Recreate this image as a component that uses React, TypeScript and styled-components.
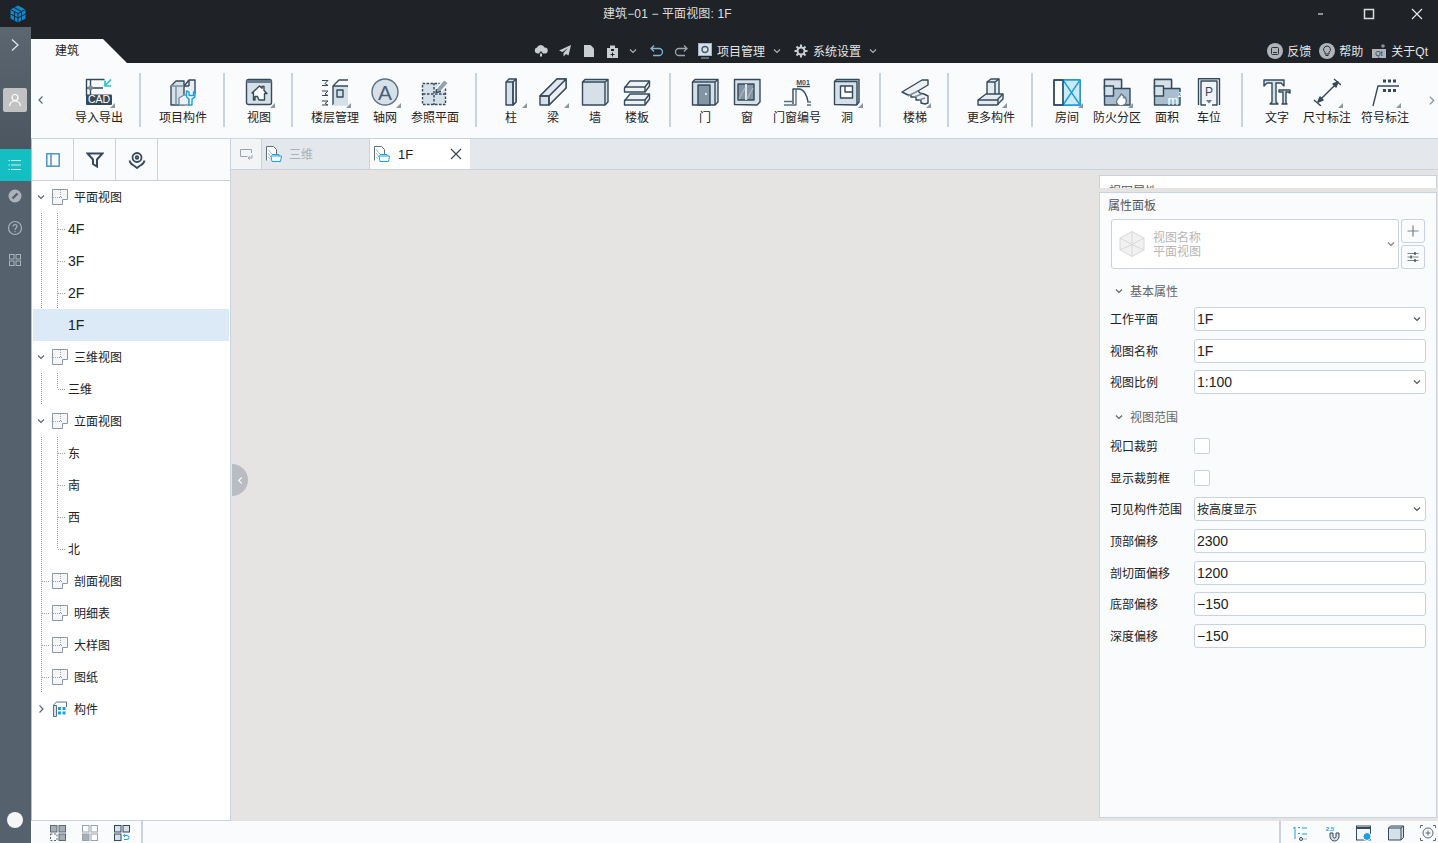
import React from 'react';
import styled, { createGlobalStyle } from 'styled-components';

const INK = '#34495c';
const FILL = '#d5e0e8';
const BLUE = '#1c9fe0';
const LINE = '#c8d2e0';

const GlobalStyle = createGlobalStyle`
  html, body { margin: 0; padding: 0; width: 1438px; height: 843px; overflow: hidden; }
  body { font-family: "Liberation Sans", "Noto Sans CJK SC", sans-serif; font-size: 12px; color: #222; }
  * { box-sizing: border-box; }
  svg { display: block; flex: none; }
`;

const Page = styled.div`
  width: 1438px;
  height: 843px;
  display: flex;
  flex-direction: column;
  background: #1f2327;
`;
const TitleBar = styled.div`
  height: 27px;
  display: flex;
  align-items: center;
  color: #dedede;
`;
const LogoCell = styled.div`
  width: 36px;
  padding-left: 10px;
`;
const TitleText = styled.div`
  margin-left: 567px;
  white-space: pre;
  line-height: 26px;
  letter-spacing: 0.12px;
`;
const WinControls = styled.div`
  margin-left: auto;
  display: flex;
  gap: 6px;
`;
const WinButton = styled.div`
  width: 42px;
  height: 24px;
  display: flex;
  align-items: center;
  justify-content: center;
`;
const Body = styled.div`
  flex: 1;
  display: flex;
  min-height: 0;
`;
const Rail = styled.div`
  width: 31px;
  flex: none;
  padding-right: 1px;
  display: flex;
  flex-direction: column;
  align-items: stretch;
  background: linear-gradient(#5c6670 0, #4b5661 122px, #55626e 123px);
`;
const RailArrow = styled.div`
  height: 36px;
  display: flex;
  align-items: center;
  justify-content: center;
`;
const RailUser = styled.div`
  margin: 25px 3px 0;
  height: 24px;
  background: #c2c2c2;
  border-radius: 2px;
  display: flex;
  align-items: center;
  justify-content: center;
`;
const RailActive = styled.div`
  margin: 37px -1px 0 0;
  padding-right: 1px;
  height: 32px;
  background: #14bfc4;
  display: flex;
  align-items: center;
  justify-content: center;
`;
const RailItem = styled.div`
  height: 32px;
  padding-bottom: 2px;
  display: flex;
  align-items: center;
  justify-content: center;
`;
const RailDot = styled.div`
  margin: auto auto 15px;
  width: 16px;
  height: 16px;
  border-radius: 50%;
  background: #f6f6f6;
`;
const Main = styled.div`
  flex: 1;
  min-width: 0;
  display: flex;
  flex-direction: column;
`;
const TabRow = styled.div`
  height: 36px;
  display: flex;
  align-items: flex-end;
  color: #e4e4e4;
`;
const RibbonTab = styled.div`
  width: 96px;
  height: 24px;
  padding-left: 24px;
  line-height: 25px;
  color: #222;
  background: #fafbfc;
  clip-path: polygon(0 0, 72px 0, 96px 24px, 0 24px);
`;
const QuickTools = styled.div`
  margin-left: 402px;
  height: 24px;
  display: flex;
  align-items: center;
`;
const QuickIcon = styled.div<{ $w?: number; $ml?: number; $mr?: number }>`
  width: ${p => p.$w ?? 24}px;
  margin-left: ${p => p.$ml ?? 0}px;
  margin-right: ${p => p.$mr ?? 0}px;
  height: 24px;
  display: flex;
  align-items: center;
  justify-content: center;
`;
const QuickLabel = styled.span`
  white-space: nowrap;
  margin: 0 4px 2px 4px;
`;
const HelpLinks = styled.div`
  margin-left: auto;
  height: 24px;
  padding-right: 10px;
  display: flex;
  align-items: center;
  gap: 8px;
`;
const HelpLink = styled.div`
  display: flex;
  align-items: center;
  gap: 4px;
  white-space: nowrap;
`;
const HelpText = styled.span`
  margin-bottom: 2px;
`;
const Ribbon = styled.div`
  height: 76px;
  flex: none;
  display: flex;
  background: #fafbfc;
  border-bottom: 1px solid ${LINE};
`;
const RibbonArrow = styled.div<{ $end?: boolean }>`
  width: ${p => (p.$end ? 24 : 39)}px;
  height: 74px;
  display: flex;
  align-items: center;
  justify-content: ${p => (p.$end ? 'flex-end' : 'flex-start')};
  padding: ${p => (p.$end ? '0 1px 0 0' : '0 0 0 5px')};
  flex: none;
`;
const RibbonGroup = styled.div`
  display: flex;
`;
const RibbonSep = styled.div`
  width: 2px;
  height: 54px;
  margin: 10px 13px 0 11px;
  background: ${LINE};
`;
const RibbonItem = styled.div<{ $w: number }>`
  width: ${p => p.$w}px;
  padding-top: 15px;
  display: flex;
  flex-direction: column;
  align-items: center;
`;
const RibbonIcon = styled.div<{ $menu?: boolean }>`
  position: relative;
  width: 28px;
  height: 28px;
  ${p => p.$menu && `
    &::after {
      content: '';
      position: absolute;
      right: -2px;
      bottom: -2px;
      border-style: solid;
      border-width: 0 0 5px 5px;
      border-color: transparent transparent #8a98a5 transparent;
    }
  `}
`;
const RibbonLabel = styled.div`
  margin-top: 4px;
  line-height: 16px;
  white-space: nowrap;
`;
const Content = styled.div`
  flex: 1;
  display: flex;
  min-height: 0;
`;
const TreePanel = styled.div`
  width: 200px;
  flex: none;
  display: flex;
  flex-direction: column;
  background: #fff;
  border-left: 1px solid #b4c0cc;
  border-right: 1px solid ${LINE};
  border-bottom: 1px solid ${LINE};
`;
const TreeTools = styled.div`
  height: 42px;
  flex: none;
  display: flex;
  background: #fafbfc;
  border-bottom: 1px solid ${LINE};
`;
const TreeTool = styled.div`
  width: 42px;
  display: flex;
  align-items: center;
  justify-content: center;
  border-right: 1px solid ${LINE};
`;
const TreeRows = styled.div`
  padding: 0 1px;
`;
const TreeRow = styled.div<{ $selected?: boolean }>`
  height: 32px;
  display: flex;
  align-items: center;
  background: ${p => (p.$selected ? '#dce9f6' : 'transparent')};
`;
const TreeCell = styled.div`
  width: 16px;
  height: 32px;
  flex: none;
  display: flex;
  align-items: center;
  justify-content: center;
`;
const TreeText = styled.span<{ $latin?: boolean; $leaf?: boolean }>`
  margin-left: ${p => (p.$leaf ? 3 : 0)}px;
  margin-bottom: ${p => (p.$latin ? 0 : 2)}px;
  font-size: ${p => (p.$latin ? 14 : 12)}px;
`;
const TreeNodeIcon = styled.span`
  margin: 0 6px 0 3px;
`;
const Workspace = styled.div`
  flex: 1;
  min-width: 0;
  position: relative;
  display: flex;
  flex-direction: column;
`;
const DocTabs = styled.div`
  height: 31px;
  flex: none;
  display: flex;
  background: #e4e8ec;
  border-bottom: 1px solid ${LINE};
`;
const DocPin = styled.div`
  width: 31px;
  display: flex;
  align-items: center;
  justify-content: center;
  background: #f3f4f6;
  border-right: 1px solid ${LINE};
`;
const DocTab = styled.div<{ $active?: boolean }>`
  display: flex;
  align-items: center;
  gap: ${p => (p.$active ? 8 : 7)}px;
  padding-left: 4px;
  width: ${p => (p.$active ? 100 : 108)}px;
  background: ${p => (p.$active ? '#fff' : 'transparent')};
  color: ${p => (p.$active ? '#222' : '#a8b1ba')};
  border-right: ${p => (p.$active ? 'none' : `1px solid ${LINE}`)};
  font-size: ${p => (p.$active ? 13 : 12)}px;
`;
const DocLabel = styled.span`
  margin-bottom: 2px;
`;
const DocClose = styled.span`
  margin-left: auto;
  margin-right: 8px;
`;
const Canvas = styled.div`
  flex: 1;
  min-height: 0;
  display: flex;
  justify-content: flex-end;
  padding: 5px 1px 3px 0;
  background: #e5e4e2;
`;
const Collapse = styled.div`
  position: absolute;
  left: 1px;
  top: 325px;
  width: 16px;
  height: 32px;
  border-radius: 0 16px 16px 0;
  background: #b9bcc0;
  display: flex;
  align-items: center;
  justify-content: center;
`;
const SideColumn = styled.div`
  width: 338px;
  display: flex;
  flex-direction: column;
  gap: 4px;
`;
const ClippedPanel = styled.div`
  height: 13px;
  flex: none;
  overflow: hidden;
  padding: 8px 0 0 9px;
  line-height: 16px;
  color: #555;
  background: #fff;
  border: 1px solid ${LINE};
  border-bottom: none;
`;
const PropsPanel = styled.div`
  flex: 1;
  padding: 5px 10px 0 8px;
  background: #fafbfc;
  border: 1px solid ${LINE};
`;
const PropsTitle = styled.div`
  line-height: 16px;
  color: #555;
`;
const ViewPicker = styled.div`
  display: flex;
  gap: 2px;
  margin: 5px 0 0 3px;
`;
const ViewBox = styled.div`
  width: 288px;
  height: 50px;
  display: flex;
  align-items: center;
  padding: 0 2px 0 6px;
  background: #fff;
  border: 1px solid ${LINE};
  border-radius: 3px;
`;
const ViewText = styled.div`
  margin: 2px 0 0 7px;
  line-height: 14px;
  color: #b6b6b6;
`;
const ViewChevron = styled.div`
  margin-left: auto;
`;
const ViewButtons = styled.div`
  display: flex;
  flex-direction: column;
  gap: 2px;
`;
const ViewButton = styled.div`
  width: 24px;
  height: 24px;
  display: flex;
  align-items: center;
  justify-content: center;
  border: 1px solid ${LINE};
  border-radius: 3px;
  background: #fafbfc;
`;
const SectionHead = styled.div<{ $first?: boolean }>`
  height: 16px;
  margin: ${p => (p.$first ? '14px 0 8px' : '15px 0 8.6px')};
  padding-left: 6px;
  display: flex;
  align-items: center;
  gap: 6px;
  color: #666;
`;
const SectionText = styled.span`
  margin-bottom: 1px;
`;
const PropList = styled.div`
  display: flex;
  flex-direction: column;
  gap: 7.67px;
`;
const PropRow = styled.div`
  height: 24px;
  display: flex;
  align-items: center;
  padding-left: 2px;
`;
const PropLabel = styled.div`
  width: 84px;
  flex: none;
  white-space: nowrap;
  padding-bottom: 1px;
`;
const Field = styled.div<{ $cjk?: boolean }>`
  width: 232px;
  height: 24px;
  display: flex;
  align-items: center;
  justify-content: space-between;
  padding: 0 3px 0 2px;
  background: #fff;
  border: 1px solid ${LINE};
  border-radius: 3px;
  font-size: ${p => (p.$cjk ? 12 : 14)}px;
`;
const FieldValue = styled.span<{ $cjk?: boolean }>`
  margin-bottom: ${p => (p.$cjk ? 2 : 0)}px;
`;
const Check = styled.div`
  width: 16px;
  height: 16px;
  background: #fff;
  border: 1px solid ${LINE};
  border-radius: 2px;
`;
const StatusBar = styled.div`
  height: 22px;
  flex: none;
  display: flex;
  align-items: center;
  background: #fafbfc;
`;
const StatusGroup = styled.div`
  height: 22px;
  display: flex;
  align-items: center;
  gap: 16px;
  padding: 2px 0 0 19px;
`;
const StatusSep = styled.div<{ $push?: boolean }>`
  width: 2px;
  height: 22px;
  background: ${LINE};
  margin-left: ${p => (p.$push ? 'auto' : '11px')};
`;
const StatusRight = styled.div`
  height: 22px;
  display: flex;
  align-items: center;
  gap: 16px;
  padding: 2px 2px 0 11px;
`;

type IconProps = { children: React.ReactNode };
const Svg = ({ children }: IconProps) => (
  <svg width={28} height={28} viewBox="0 0 28 28" fill="none" stroke={INK} strokeWidth={1.4} strokeLinejoin="round">
    {children}
  </svg>
);
const Chevron = ({ dir = 'down', color = '#5b6670', size = 10 }: { dir?: 'down' | 'left' | 'right'; color?: string; size?: number }) => {
  const d = dir === 'down' ? 'M2 3.5 5 6.5 8 3.5' : dir === 'left' ? 'M6.5 1.5 3 5l3.5 3.5' : 'M3.5 1.5 7 5 3.5 8.5';
  return (
    <svg width={size} height={size} viewBox="0 0 10 10" fill="none" stroke={color} strokeWidth={1.2}>
      <path d={d} />
    </svg>
  );
};

const ribbonIcons: Record<string, React.ReactNode> = {
  cad: (
    <Svg>
      <path d="M1.5 18V1.5h18M1.5 10H18M5.5 1.5V18" />
      <circle cx="5.5" cy="10" r="2.4" fill="#7d8b98" stroke="none" />
      <rect x="1" y="16.5" width="26" height="10.5" rx="1" fill={INK} stroke="none" />
      <text x="14" y="25.4" textAnchor="middle" fontSize="10.5" fill="#fff" stroke="none" fontFamily="Liberation Sans">CAD</text>
      <path d="M26 1.5 20 7.5M20 2.5v5.5h6" stroke="#1fc4c8" strokeWidth={1.6} />
    </Svg>
  ),
  part: (
    <Svg>
      <path d="M2 27V8l5-5h8v24z" fill={FILL} />
      <path d="M15 8H7v19M7 8H2" stroke="#7c8e9d" />
      <path d="M15 8l5-6h6v14" fill="#e8eef2" />
      <path d="M20 8V2M15 8h5" />
      <path d="M10 27v-7l5-3h5v10z" fill="#eef2f5" stroke="#7c8e9d" />
      <path d="M17.5 13v5c0 1.5 1.5 2.5 2.5 3v6h3v-6c1.2-.5 3-1.5 3-3.5V13l-1.5 1v3.5H20V14z" fill="#fff" stroke={BLUE} />
    </Svg>
  ),
  view: (
    <Svg>
      <rect x="1.5" y="1.5" width="25" height="25" rx="2" fill={FILL} />
      <path d="M1.5 3.5h25" strokeWidth={3} stroke="#6a7b89" />
      <path d="M7 15l7.5-7L17 10.300V8.500h2v4l3 3h-2.500V22H14l-1.500-3.500H10V22H8.500v-7z" fill="#fff" />
    </Svg>
  ),
  floor: (
    <Svg>
      <path d="M1 2.500h6L4 5.500l3 2H1M1 13h6l-3 3 3 1.500H1M1 23h6l-3 2.500 3 1.500H1" strokeWidth={1} />
      <path d="M12 8h15v19H12z" fill={FILL} stroke="none" />
      <path d="M12 27V8l6-6h9M12 8h15" />
      <path d="M12 27h15" stroke={FILL} />
      <rect x="16" y="12" width="6" height="7" fill={FILL} />
    </Svg>
  ),
  axis: (
    <Svg>
      <circle cx="14" cy="14" r="13" fill={FILL} stroke="#5d7080" />
      <text x="14" y="21.5" textAnchor="middle" fontSize="21" fill="#4b5e70" stroke="none" fontFamily="Liberation Sans">A</text>
    </Svg>
  ),
  refPlane: (
    <Svg>
      <rect x="2" y="5" width="22" height="22" fill={FILL} stroke="none" />
      <rect x="1.5" y="5.5" width="23" height="21" strokeDasharray="2.500 1.500" />
      <path d="M13 5v22M2 16h22" strokeDasharray="2.500 1.500" />
      <path d="M15 11 23 1.500l4.500 3.500-7.500 8.500-5 1z" fill="#8fa3b3" stroke="#fff" />
      <path d="M20 13.500 15 14.500l.5-3.500" />
    </Svg>
  ),
  column: (
    <Svg>
      <path d="M9 27V4l3-3h7v23l-3 3z" fill={FILL} />
      <path d="M16 4l3-3v23l-3 3z" fill="#eef2f5" />
      <path d="M9 4h7v23" />
    </Svg>
  ),
  beam: (
    <Svg>
      <path d="M1 27v-9L18 1h9v9L10 27z" fill={FILL} />
      <path d="M10 18 27 1v9L10 27z" fill="#eef2f5" />
      <path d="M1 18 18 1h9L10 18z" fill="#e0e8ee" />
      <path d="M1 18h9v9" />
    </Svg>
  ),
  wall: (
    <Svg>
      <path d="M1.500 4 4 1.500h23V24l-3 3H1.500z" fill={FILL} />
      <path d="M24 27V4H1.500M24 4l3-2.500" />
    </Svg>
  ),
  slab: (
    <Svg>
      <path d="M1.500 10 7 3h19.500v5L22 14H1.500z" fill="#eef2f5" />
      <path d="M1.500 9H22v5M22 9l4.500-6" />
      <path d="M1.500 23 7 16h19.500v5L22 27H1.500z" fill="#eef2f5" />
      <path d="M1.500 22H22v5M22 22l4.500-6" />
    </Svg>
  ),
  door: (
    <Svg>
      <path d="M1.500 27V4L4 1.500h23V24l-3 3z" fill={FILL} />
      <path d="M24 27V4H1.500M24 4l3-2.500" />
      <rect x="7" y="7" width="12" height="20" fill="#8394a3" />
      <circle cx="15" cy="16" r="1" fill="#fff" stroke="none" />
    </Svg>
  ),
  window: (
    <Svg>
      <path d="M1.500 26.500V1.500H27V24l-3 3z" fill={FILL} />
      <rect x="5" y="6" width="16" height="16" fill="#8394a3" />
      <path d="M13 6v16" stroke="#fff" strokeWidth={1.5} />
      <path d="M6 21 12 10M14 21l6-11" stroke="#a9b6c1" />
    </Svg>
  ),
  doorTag: (
    <Svg>
      <text x="20" y="6.5" textAnchor="middle" fontSize="7" fontWeight="700" fill={INK} stroke="none" fontFamily="Liberation Sans">M01</text>
      <path d="M14 8.500h13" />
      <path d="M10 26V11h6c5 0 8 7 9 12.500" />
      <path d="M1 27h12V11M1 23.500h9M24 24h5M24 27h5" stroke="#5f7282" />
    </Svg>
  ),
  hole: (
    <Svg>
      <path d="M1.500 26.500V3.500l2-2H26V24l-2.500 3z" fill={FILL} />
      <path d="M1.500 3.500H24V27" />
      <rect x="7.500" y="8" width="12" height="12" fill="#fff" />
      <path d="M12 8v6h7.500" />
    </Svg>
  ),
  stair: (
    <Svg>
      <path d="M1 14 21 2h6v5L17 13l2 2 4 1 4 2v7l-3 1-4-1v-3h-5v-3h-5v-2H7z" fill="#eef2f5" />
      <path d="M7 18 17 13M13 19l8-3M18 22l6-2" stroke="#7c8e9d" />
    </Svg>
  ),
  more: (
    <Svg>
      <path d="M10 16V4l4-3h8v15" fill="#e4ebf0" />
      <path d="M10 4h8v14M18 4l4-3" />
      <path d="M1 27v-5l8-6h17v5l-6 6z" fill="#e4ebf0" />
      <path d="M1 22h20v5M20 22l6-6" />
    </Svg>
  ),
  room: (
    <Svg>
      <rect x="1" y="2" width="26" height="25" fill="#fff" />
      <rect x="10" y="2" width="17" height="25" fill="#cbeaf8" stroke={BLUE} />
      <path d="M10 2 27 27M27 2 10 27" stroke={BLUE} />
      <rect x="1" y="2" width="9" height="25" />
    </Svg>
  ),
  fire: (
    <Svg>
      <path d="M1.500 27V1.500h17v9H27V27z" fill="#a9bfcf" />
      <rect x="1.500" y="1.500" width="17" height="9" fill={FILL} />
      <rect x="1.500" y="8" width="9" height="10" fill={FILL} />
      <path d="M17 28c-3-1-4-4-3-6 1-2 3-3 4-6 2 1 3 3 3 4l1-1c1.500 2 2 4 .5 7-1 1-3 2-5.500 2z" fill="#fff" stroke="#6b7d8c" />
    </Svg>
  ),
  area: (
    <Svg>
      <path d="M1.500 27V1.500h17v9H27V27z" fill="#a9bfcf" />
      <rect x="1.500" y="1.500" width="17" height="9" fill={FILL} />
      <rect x="1.500" y="8" width="9" height="10" fill={FILL} />
      <text x="20" y="27" textAnchor="middle" fontSize="13" fill="#fff" stroke="none" fontFamily="Liberation Sans">m</text>
      <text x="27" y="19" textAnchor="middle" fontSize="7" fontWeight="700" fill="#fff" stroke="none" fontFamily="Liberation Sans">2</text>
    </Svg>
  ),
  parking: (
    <Svg>
      <rect x="6" y="3" width="16" height="22" fill="#f1f4f6" stroke="none" />
      <path d="M11 27H6V3h16v24h-5" />
      <path d="M3.500 27V.8h21V27" />
      <text x="14" y="17.5" textAnchor="middle" fontSize="12" fill={INK} stroke="none" fontFamily="Liberation Sans">P</text>
      <path d="M11 22h6l-3 3.500z" fill="#6a7b89" stroke="none" />
    </Svg>
  ),
  text: (
    <Svg>
      <path d="M1 8V2h20v6l-3-3h-5v19l2 2H7l2-2V5H4z" fill={FILL} />
      <path d="M16 14v-2h11v3l-2-1h-2v11l1 1h-5l1-1V14h-2z" fill={FILL} />
    </Svg>
  ),
  dim: (
    <Svg>
      <path d="M1 22l7 6M21 1l7 6" />
      <path d="M5 24 25 4" />
      <path d="M5 24l2-5 3 3zM25 4l-5 2 3 3z" fill={INK} />
    </Svg>
  ),
  symbol: (
    <Svg>
      <path d="M2 28 7 8h21" />
      <path d="M12 1.500h3v3h-3zM17 1.500h3v3h-3zM22 1.500h3v3h-3zM12 11h3v3h-3zM17 11h3v3h-3zM22 11h3v3h-3z" fill={INK} stroke="none" />
    </Svg>
  ),
};

type RibbonEntry = { label: string; icon: string; menu?: boolean };
const ribbonGroups: RibbonEntry[][] = [
  [{ label: '导入导出', icon: 'cad', menu: true }],
  [{ label: '项目构件', icon: 'part' }],
  [{ label: '视图', icon: 'view', menu: true }],
  [
    { label: '楼层管理', icon: 'floor', menu: true },
    { label: '轴网', icon: 'axis', menu: true },
    { label: '参照平面', icon: 'refPlane' },
  ],
  [
    { label: '柱', icon: 'column', menu: true },
    { label: '梁', icon: 'beam', menu: true },
    { label: '墙', icon: 'wall' },
    { label: '楼板', icon: 'slab' },
  ],
  [
    { label: '门', icon: 'door' },
    { label: '窗', icon: 'window' },
    { label: '门窗编号', icon: 'doorTag' },
    { label: '洞', icon: 'hole', menu: true },
  ],
  [{ label: '楼梯', icon: 'stair', menu: true }],
  [{ label: '更多构件', icon: 'more', menu: true }],
  [
    { label: '房间', icon: 'room', menu: true },
    { label: '防火分区', icon: 'fire', menu: true },
    { label: '面积', icon: 'area' },
    { label: '车位', icon: 'parking' },
  ],
  [
    { label: '文字', icon: 'text' },
    { label: '尺寸标注', icon: 'dim', menu: true },
    { label: '符号标注', icon: 'symbol', menu: true },
  ],
];

type Guide = 'pass' | 'tee' | 'end' | 'none';
const GuideMark = ({ kind }: { kind: Guide }) => (
  <svg width="16" height="32" viewBox="0 0 16 32" fill="none" stroke="#9a9a9a" strokeDasharray="1 1" shapeRendering="crispEdges">
    {kind !== 'none' && <path d={kind === 'end' ? 'M8.5 0v16' : 'M8.5 0v32'} />}
    {(kind === 'tee' || kind === 'end') && <path d="M9 16.5h7" />}
  </svg>
);

const NodeIcon = () => (
  <svg width="16" height="16" viewBox="0 0 16 16">
    <path d="M.5.5h15v10h-5v5H.5z" fill="#f5f6f8" stroke="#8a9aa8" />
    <path d="M1 8.500h9M8.500 1v7" stroke="#9aa7b2" strokeDasharray="1 1" shapeRendering="crispEdges" />
  </svg>
);
const PartsIcon = () => (
  <svg width="16" height="16" viewBox="0 0 16 16" fill="none">
    <path d="M1.500 15.500V4l3-3h10v5" stroke="#5d7080" />
    <path d="M1.500 4.500h3v11h-3z" fill="#d5e0e8" stroke="#5d7080" />
    <path d="M6 6h3v3H6zM10.500 6h3v3h-3zM6 10.500h3v3H6zM10.500 10.500h3v3h-3z" fill={BLUE} />
  </svg>
);

type TreeEntry = { label: string; guides?: Guide[]; head?: 'open' | 'closed' | Guide; selected?: boolean; latin?: boolean; parts?: boolean };
const treeRows: TreeEntry[] = [
  { label: '平面视图', head: 'open' },
  { label: '4F', guides: ['pass', 'tee'], latin: true },
  { label: '3F', guides: ['pass', 'tee'], latin: true },
  { label: '2F', guides: ['pass', 'tee'], latin: true },
  { label: '1F', guides: ['none', 'none'], latin: true, selected: true },
  { label: '三维视图', head: 'open' },
  { label: '三维', guides: ['pass', 'end'] },
  { label: '立面视图', head: 'open' },
  { label: '东', guides: ['pass', 'tee'] },
  { label: '南', guides: ['pass', 'tee'] },
  { label: '西', guides: ['pass', 'tee'] },
  { label: '北', guides: ['pass', 'end'] },
  { label: '剖面视图', head: 'tee' },
  { label: '明细表', head: 'tee' },
  { label: '大样图', head: 'tee' },
  { label: '图纸', head: 'tee' },
  { label: '构件', head: 'closed', parts: true },
];

type PropEntry = { label: string; value?: string; select?: boolean; check?: boolean; cjk?: boolean };
const basicProps: PropEntry[] = [
  { label: '工作平面', value: '1F', select: true },
  { label: '视图名称', value: '1F' },
  { label: '视图比例', value: '1:100', select: true },
];
const rangeProps: PropEntry[] = [
  { label: '视口裁剪', check: true },
  { label: '显示裁剪框', check: true },
  { label: '可见构件范围', value: '按高度显示', select: true, cjk: true },
  { label: '顶部偏移', value: '2300' },
  { label: '剖切面偏移', value: '1200' },
  { label: '底部偏移', value: '−150' },
  { label: '深度偏移', value: '−150' },
];

const DocIcon = () => (
  <svg width="16" height="16" viewBox="0 0 16 16" fill="none" stroke="#5d7080">
    <path d="M.5 14.500V.5h7l3 3v5" fill="#fff" />
    <path d="M2 3.500 6 8M2 7l3 4M2 10.500 4 13" stroke="#a9b8c4" />
    <path d="M5 10h10.500l-1 5.500H6z" fill="#fff" stroke={BLUE} />
    <path d="M6 8.500h7V10" stroke={BLUE} />
  </svg>
);

const PropField = ({ entry }: { entry: PropEntry }) => (
  <PropRow>
    <PropLabel>{entry.label}</PropLabel>
    {entry.check ? (
      <Check />
    ) : (
      <Field $cjk={entry.cjk}>
        <FieldValue $cjk={entry.cjk}>{entry.value}</FieldValue>
        {entry.select && <Chevron color="#4b5761" />}
      </Field>
    )}
  </PropRow>
);

const App = () => (
  <Page>
    <GlobalStyle />
    <TitleBar>
      <LogoCell>
        <svg width="16" height="18" viewBox="0 0 16 18">
          <path d="M8 .5l7.500 4v9L8 17.500.5 13.500v-9z" fill="#1487c8" />
          <path d="M.5 4.500 8 8.500l7.500-4M8 8.500v9M4 2.500l7.500 4M4.500 6.500v9M11.500 6.500v9M.5 9 8 13l7.500-4" stroke="#0b2a3d" strokeWidth={1} fill="none" />
        </svg>
      </LogoCell>
      <TitleText>建筑−01 − 平面视图: 1F</TitleText>
      <WinControls>
        <WinButton>
          <svg width="10" height="10" viewBox="0 0 10 10"><path d="M2 5h5" stroke="#ddd" strokeWidth={1.2} /></svg>
        </WinButton>
        <WinButton>
          <svg width="12" height="12" viewBox="0 0 12 12"><rect x="1.5" y="1.5" width="9" height="9" fill="none" stroke="#ddd" strokeWidth={1.5} /></svg>
        </WinButton>
        <WinButton>
          <svg width="12" height="12" viewBox="0 0 12 12"><path d="M1 1l10 10M11 1 1 11" stroke="#e6e6e6" strokeWidth={1.2} /></svg>
        </WinButton>
      </WinControls>
    </TitleBar>
    <Body>
      <Rail>
        <RailArrow>
          <svg width="12" height="14" viewBox="0 0 12 14" fill="none" stroke="#e6e9ec" strokeWidth={1.2}><path d="M3 1.500 9 7l-6 5.500" /></svg>
        </RailArrow>
        <RailUser>
          <svg width="14" height="14" viewBox="0 0 14 14" fill="none" stroke="#fff" strokeWidth={1.2}>
            <circle cx="7" cy="4.500" r="3" />
            <path d="M1.500 13c.5-3.500 2.500-5 5.500-5s5 1.500 5.500 5" />
          </svg>
        </RailUser>
        <RailActive>
          <svg width="14" height="12" viewBox="0 0 14 12" stroke="#cfeff0" strokeWidth={1.2}>
            <path d="M3 1.500h10M3 6h10M3 10.500h10M.5 1.500H2M.5 6H2M.5 10.500H2" />
          </svg>
        </RailActive>
        <RailItem>
          <svg width="14" height="14" viewBox="0 0 14 14">
            <circle cx="7" cy="7" r="6.500" fill="#aab2ba" />
            <path d="M4.500 9.500l5-5" stroke="#55626e" strokeWidth={2.4} />
          </svg>
        </RailItem>
        <RailItem>
          <svg width="16" height="16" viewBox="0 0 16 16" fill="none" stroke="#aab2ba" strokeWidth={1.2}>
            <circle cx="8" cy="8" r="6.500" />
            <path d="M6 6.500C6 4 10 4 10 6.500 10 8 8 8 8 10M8 11v1.200" />
          </svg>
        </RailItem>
        <RailItem>
          <svg width="12" height="12" viewBox="0 0 12 12" fill="none" stroke="#aab2ba">
            <rect x=".5" y=".5" width="4.500" height="4.500" />
            <rect x="7" y=".5" width="4.500" height="4.500" />
            <rect x=".5" y="7" width="4.500" height="4.500" />
            <rect x="7" y="7" width="4.500" height="4.500" />
          </svg>
        </RailItem>
        <RailDot />
      </Rail>
      <Main>
        <TabRow>
          <RibbonTab>建筑</RibbonTab>
          <QuickTools>
            <QuickIcon>
              <svg width="14" height="14" viewBox="0 0 14 14" fill="#c9ced3"><path d="M3.500 9.500A3 3 0 0 1 3 3.600 4 4 0 0 1 10.500 3.500 3 3 0 0 1 11 9.500H9L7 7 5 9.500zM6 9.500h2v3H6z" /></svg>
            </QuickIcon>
            <QuickIcon>
              <svg width="14" height="14" viewBox="0 0 14 14" fill="#c9ced3"><path d="M13 1 1 6.500 4.500 8 10 4 5.500 9v3.500L8 10l2.500 1.500z" /></svg>
            </QuickIcon>
            <QuickIcon>
              <svg width="12" height="14" viewBox="0 0 12 14" fill="#c9ced3"><path d="M1 1h6.500L11 4.500V13H1z" /></svg>
            </QuickIcon>
            <QuickIcon>
              <svg width="14" height="15" viewBox="0 0 14 15" fill="#c9ced3"><path d="M1 4h3V1.500h5V4h3v10H1zM5 5v2h3V5zM6 8.500V10H4.500v1H6v1.500h1V11h1.500v-1H7V8.500z" fillRule="evenodd" /></svg>
            </QuickIcon>
            <QuickIcon $w={16} $mr={4}><Chevron color="#aab0b6" /></QuickIcon>
            <QuickIcon>
              <svg width="14" height="14" viewBox="0 0 14 14" fill="none" stroke="#7fb4d6" strokeWidth={1.3}><path d="M1.500 4.500H9a3.500 3.500 0 0 1 0 7H3M4 1.500l-3 3 3 3" /></svg>
            </QuickIcon>
            <QuickIcon>
              <svg width="14" height="14" viewBox="0 0 14 14" fill="none" stroke="#9da3a8" strokeWidth={1.3}><path d="M12.500 4.500H5a3.500 3.500 0 0 0 0 7h6M10 1.500l3 3-3 3" /></svg>
            </QuickIcon>
            <QuickIcon $w={16} $ml={4}>
              <svg width="14" height="16" viewBox="0 0 14 16"><rect x=".5" y=".5" width="13" height="12" fill="#d5e0e8" stroke="#9fb4c4" /><circle cx="7" cy="6.500" r="3" fill="none" stroke="#4c5c6a" strokeWidth={1.4} /><path d="M3 15h8" stroke="#9fb4c4" /></svg>
            </QuickIcon>
            <QuickLabel>项目管理</QuickLabel>
            <QuickIcon $w={16}><Chevron color="#aab0b6" /></QuickIcon>
            <QuickIcon $w={16} $ml={8}>
              <svg width="14" height="14" viewBox="0 0 14 14"><circle cx="7" cy="7" r="3.500" fill="none" stroke="#c9ced3" strokeWidth={2} /><path d="M7 .5v3M7 10.500v3M.5 7h3M10.500 7h3M2.500 2.500l2 2M9.500 9.500l2 2M11.500 2.500l-2 2M4.500 9.500l-2 2" stroke="#c9ced3" strokeWidth={2} /></svg>
            </QuickIcon>
            <QuickLabel>系统设置</QuickLabel>
            <QuickIcon $w={16}><Chevron color="#aab0b6" /></QuickIcon>
          </QuickTools>
          <HelpLinks>
            <HelpLink>
              <svg width="16" height="16" viewBox="0 0 16 16"><circle cx="8" cy="8" r="8" fill="#aeb4ba" /><rect x="4.500" y="4.500" width="7" height="7" rx="1" fill="none" stroke="#2a3036" /><path d="M6 9.500h4" stroke="#2a3036" /></svg>
              <HelpText>反馈</HelpText>
            </HelpLink>
            <HelpLink>
              <svg width="16" height="16" viewBox="0 0 16 16"><circle cx="8" cy="8" r="8" fill="#aeb4ba" /><path d="M8 3a3.500 3.500 0 0 0-2 6.300V11h4V9.300A3.500 3.500 0 0 0 8 3zM6.500 12.500h3" fill="none" stroke="#2a3036" /></svg>
              <HelpText>帮助</HelpText>
            </HelpLink>
            <HelpLink>
              <svg width="16" height="16" viewBox="0 0 16 16">
                <path d="M1 6h14v9H1z" fill="#aeb4ba" />
                <circle cx="12" cy="3" r="1.800" fill="#8a9097" />
                <text x="8" y="13.200" textAnchor="middle" fontSize="7" fill="#2a3036" fontFamily="Liberation Sans">Qt</text>
              </svg>
              <HelpText>关于Qt</HelpText>
            </HelpLink>
          </HelpLinks>
        </TabRow>
        <Ribbon>
          <RibbonArrow><Chevron dir="left" /></RibbonArrow>
          {ribbonGroups.map((group, i) => (
            <React.Fragment key={i}>
              <RibbonGroup>
                {group.map(item => (
                  <RibbonItem key={item.label} $w={item.label.length > 2 ? 58 : 42}>
                    <RibbonIcon $menu={item.menu}>{ribbonIcons[item.icon]}</RibbonIcon>
                    <RibbonLabel>{item.label}</RibbonLabel>
                  </RibbonItem>
                ))}
              </RibbonGroup>
              {i < ribbonGroups.length - 1 && <RibbonSep />}
            </React.Fragment>
          ))}
          <RibbonArrow $end><Chevron dir="right" color="#8a949c" size={11} /></RibbonArrow>
        </Ribbon>
        <Content>
          <TreePanel>
            <TreeTools>
              <TreeTool>
                <svg width="14" height="14" viewBox="0 0 14 14" fill="none" stroke="#4b95cc" strokeWidth={1.5}><rect x=".8" y=".8" width="12.400" height="12.400" /><path d="M5 1v12" /></svg>
              </TreeTool>
              <TreeTool>
                <svg width="18" height="16" viewBox="0 0 18 16" fill="none" stroke={INK} strokeWidth={2}><path d="M1.500 1.500h15l-5.500 6v7l-4-2.500V7.500z" /></svg>
              </TreeTool>
              <TreeTool>
                <svg width="18" height="18" viewBox="0 0 18 18" fill="none" stroke={INK} strokeWidth={1.8}>
                  <circle cx="9" cy="6.500" r="4.500" />
                  <circle cx="9" cy="6.500" r="1.300" />
                  <path d="M1.500 9.500c.5 3 3 4.500 5 5.500L9 17l2.500-2c2-1 4.500-2.500 5-5.500" />
                </svg>
              </TreeTool>
            </TreeTools>
            <TreeRows>
              {treeRows.map(row => (
                <TreeRow key={row.label} $selected={row.selected}>
                  {row.guides ? (
                    <>
                      {row.guides.map((g, i) => (
                        <TreeCell key={i}><GuideMark kind={g} /></TreeCell>
                      ))}
                      <TreeText $leaf $latin={row.latin}>{row.label}</TreeText>
                    </>
                  ) : (
                    <>
                      <TreeCell>
                        {row.head === 'open' && <Chevron />}
                        {row.head === 'closed' && <Chevron dir="right" />}
                        {row.head === 'tee' && <GuideMark kind="tee" />}
                      </TreeCell>
                      <TreeNodeIcon>{row.parts ? <PartsIcon /> : <NodeIcon />}</TreeNodeIcon>
                      <TreeText>{row.label}</TreeText>
                    </>
                  )}
                </TreeRow>
              ))}
            </TreeRows>
          </TreePanel>
          <Workspace>
            <DocTabs>
              <DocPin>
                <svg width="14" height="12" viewBox="0 0 14 12" fill="none" stroke="#9aa4ad"><path d="M12.500 5V1.500h-11v7h7" /><path d="M13 7v3H9.500M11 8l-2 2 2 1.500" /></svg>
              </DocPin>
              <DocTab><DocIcon /><DocLabel>三维</DocLabel></DocTab>
              <DocTab $active>
                <DocIcon />
                1F
                <DocClose>
                  <svg width="12" height="12" viewBox="0 0 12 12"><path d="M1 1l10 10M11 1 1 11" stroke="#3c4a56" strokeWidth={1.3} /></svg>
                </DocClose>
              </DocTab>
            </DocTabs>
            <Canvas>
              <SideColumn>
                <ClippedPanel>视图属性</ClippedPanel>
                <PropsPanel>
                  <PropsTitle>属性面板</PropsTitle>
                  <ViewPicker>
                    <ViewBox>
                      <svg width="28" height="28" viewBox="0 0 28 28" fill="none" stroke="#d8d8d8">
                        <path d="M14 1.500 26 8v12l-12 6.500L2 20V8z" fill="#f1f1f1" />
                        <path d="M2 8l12 6.500L26 8M14 14.500v12M14 1.500v13M2 20l12-5.500L26 20" />
                      </svg>
                      <ViewText>视图名称<br />平面视图</ViewText>
                      <ViewChevron><Chevron color="#7a848c" /></ViewChevron>
                    </ViewBox>
                    <ViewButtons>
                      <ViewButton>
                        <svg width="12" height="12" viewBox="0 0 12 12"><path d="M6 .5v11M.5 6h11" stroke="#7a848c" strokeWidth={1.2} /></svg>
                      </ViewButton>
                      <ViewButton>
                        <svg width="12" height="10" viewBox="0 0 12 10"><path d="M.5 1.500h11M.5 5h11M.5 8.500h11" stroke="#7a848c" /><path d="M8 0v3M4 3.500v3M8 7v3" stroke="#4b5761" strokeWidth={1.5} /></svg>
                      </ViewButton>
                    </ViewButtons>
                  </ViewPicker>
                  <SectionHead $first><Chevron /><SectionText>基本属性</SectionText></SectionHead>
                  <PropList>{basicProps.map(p => <PropField key={p.label} entry={p} />)}</PropList>
                  <SectionHead><Chevron /><SectionText>视图范围</SectionText></SectionHead>
                  <PropList>{rangeProps.map(p => <PropField key={p.label} entry={p} />)}</PropList>
                </PropsPanel>
              </SideColumn>
            </Canvas>
            <Collapse><Chevron dir="left" color="#fff" size={9} /></Collapse>
          </Workspace>
        </Content>
        <StatusBar>
          <StatusGroup>
            <svg width="16" height="16" viewBox="0 0 16 16" fill="none" stroke="#5d6a75">
              <rect x=".5" y=".5" width="6.500" height="6.500" fill="#a7aeb5" />
              <rect x="9" y=".5" width="6.500" height="6.500" fill="#a7aeb5" />
              <rect x=".5" y="9" width="6.500" height="6.500" strokeDasharray="2 1.500" />
              <rect x="9" y="9" width="6.500" height="6.500" fill="#a7aeb5" />
            </svg>
            <svg width="16" height="16" viewBox="0 0 16 16" fill="none" stroke="#9aa2a9">
              <rect x=".5" y=".5" width="6.500" height="6.500" />
              <rect x="9" y=".5" width="6.500" height="6.500" />
              <rect x=".5" y="9" width="6.500" height="6.500" fill="#a7aeb5" />
              <rect x="9" y="9" width="6.500" height="6.500" />
            </svg>
            <svg width="16" height="16" viewBox="0 0 16 16" fill="none" stroke={INK}>
              <rect x=".5" y=".5" width="6.500" height="6.500" fill={FILL} />
              <rect x="9" y=".5" width="6.500" height="6.500" fill={FILL} />
              <rect x=".5" y="9" width="6.500" height="6.500" fill={FILL} />
              <path d="M9.500 10.500H13a2 2 0 0 1 0 4h-3M11 8.800 9.300 10.500l1.700 1.700" stroke={BLUE} />
            </svg>
          </StatusGroup>
          <StatusSep />
          <StatusSep $push />
          <StatusRight>
            <svg width="16" height="16" viewBox="0 0 16 16" fill="none" stroke={BLUE}>
              <path d="M1 3.500 3 2v12M6 2.500h2M6 8.500h2" />
              <path d="M10 3h5M10 9h5" />
              <circle cx="9" cy="14" r="1.500" stroke={INK} />
              <path d="M11 14h4" stroke="#aab0b6" />
            </svg>
            <svg width="16" height="16" viewBox="0 0 16 16" fill="none" overflow="visible">
              <text x="6" y="5.500" textAnchor="middle" fontSize="6" fontWeight="700" fill={BLUE} fontFamily="Liberation Sans">2.5</text>
              <path d="M6 8v3.500a4.500 4.500 0 0 0 9 0V8h-3v3.500a1.500 1.500 0 0 1-3 0V8z" fill={FILL} stroke={INK} />
            </svg>
            <svg width="16" height="16" viewBox="0 0 16 16" fill="none" stroke={INK}>
              <rect x=".5" y="1" width="14" height="14" fill="#f5f6f8" />
              <path d="M.5 3h14" strokeWidth={2} />
              <circle cx="11" cy="11.500" r="4" fill={BLUE} stroke="#fff" />
            </svg>
            <svg width="16" height="16" viewBox="0 0 16 16" fill={FILL} stroke={INK}>
              <path d="M.5 3l2-2h13v11.500L13 15H.5z" />
              <path d="M.5 3H13v12M13 3l2.500-2" fill="none" />
            </svg>
            <svg width="16" height="16" viewBox="0 0 16 16" fill="none" stroke="#5d6a75">
              <circle cx="8" cy="8" r="5" />
              <path d="M8 5.500v5M5.500 8h5" />
              <path d="M.5 3V.5H3M13 .5h2.500V3M15.500 13v2.500H13M3 15.500H.5V13" />
            </svg>
          </StatusRight>
        </StatusBar>
      </Main>
    </Body>
  </Page>
);

export default App;
